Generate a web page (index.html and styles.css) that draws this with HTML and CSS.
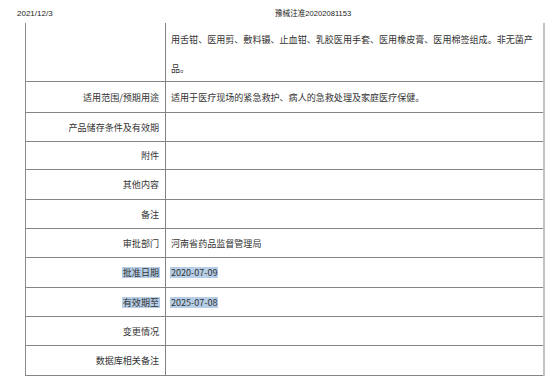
FILE: index.html
```html
<!DOCTYPE html>
<html lang="zh-CN">
<head>
<meta charset="utf-8">
<link rel="stylesheet" href="styles.css">
</head>
<body>
<header class="page-head">
  <span class="date">2021/12/3</span>
  <span class="doc-title">豫械注准20202081153</span>
</header>
<div class="sheet">
  <div class="row cut">
    <div class="label"></div>
    <div class="value"><div class="wrap">用舌钳、医用剪、敷料镊、止血钳、乳胶医用手套、医用橡皮膏、医用棉签组成。非无菌产<br>品。</div></div>
  </div>
  <div class="row h31">
    <div class="label">适用范围/预期用途</div>
    <div class="value">适用于医疗现场的紧急救护、病人的急救处理及家庭医疗保健。</div>
  </div>
  <div class="row h29">
    <div class="label">产品储存条件及有效期</div>
    <div class="value"></div>
  </div>
  <div class="row h28">
    <div class="label">附件</div>
    <div class="value"></div>
  </div>
  <div class="row h30">
    <div class="label">其他内容</div>
    <div class="value"></div>
  </div>
  <div class="row h29">
    <div class="label">备注</div>
    <div class="value"></div>
  </div>
  <div class="row h29">
    <div class="label">审批部门</div>
    <div class="value">河南省药品监督管理局</div>
  </div>
  <div class="row h30">
    <div class="label"><span class="sel">批准日期</span></div>
    <div class="value"><span class="sel">2020-07-09</span></div>
  </div>
  <div class="row h29">
    <div class="label"><span class="sel">有效期至</span></div>
    <div class="value"><span class="sel">2025-07-08</span></div>
  </div>
  <div class="row h29">
    <div class="label">变更情况</div>
    <div class="value"></div>
  </div>
  <div class="row h30">
    <div class="label">数据库相关备注</div>
    <div class="value"></div>
  </div>
</div>
</body>
</html>
```
FILE: styles.css
```css
html, body {
  margin: 0;
  padding: 0;
  background: #ffffff;
}
body {
  width: 554px;
  height: 392px;
  overflow: hidden;
  font-family: "Noto Sans CJK SC", "Noto Sans", sans-serif;
  color: #333333;
}
.page-head {
  height: 23px;
  box-sizing: border-box;
  padding-top: 9px;
  display: flex;
  align-items: flex-start;
  font-family: "Liberation Sans", "Noto Sans CJK SC", sans-serif;
  font-size: 8px;
  line-height: 10px;
  color: #222222;
}
.date {
  margin-left: 17px;
  width: 258px;
}
.doc-title {
  font-size: 7.6px;
}
.sheet {
  margin-left: 25px;
  width: 520px;
  box-sizing: border-box;
  border-left: 1px solid #8a8a8a;
  border-right: 2px solid #c2c2c2;
}
.row {
  display: grid;
  grid-template-columns: 140px 1fr;
  box-sizing: border-box;
  border-bottom: 1px solid #858585;
  font-size: 9.05px;
}
.row.cut { height: 59px; }
.row.h28 { height: 28px; }
.row.h29 { height: 29px; }
.row.h30 { height: 30px; }
.row.h31 { height: 31px; }
.label {
  box-sizing: border-box;
  border-right: 1px solid #858585;
  display: flex;
  align-items: center;
  justify-content: flex-end;
  padding-right: 6px;
  white-space: nowrap;
}
.value {
  display: flex;
  align-items: center;
  padding-left: 5px;
  white-space: nowrap;
}
.cut .value {
  align-items: flex-start;
  overflow: hidden;
}
.wrap {
  line-height: 29px;
  margin-top: 2px;
}
.sel {
  display: inline-block;
  line-height: 11px;
  background: #b5cde6;
  padding: 0 1px;
  margin: 0 -1px;
}
```
